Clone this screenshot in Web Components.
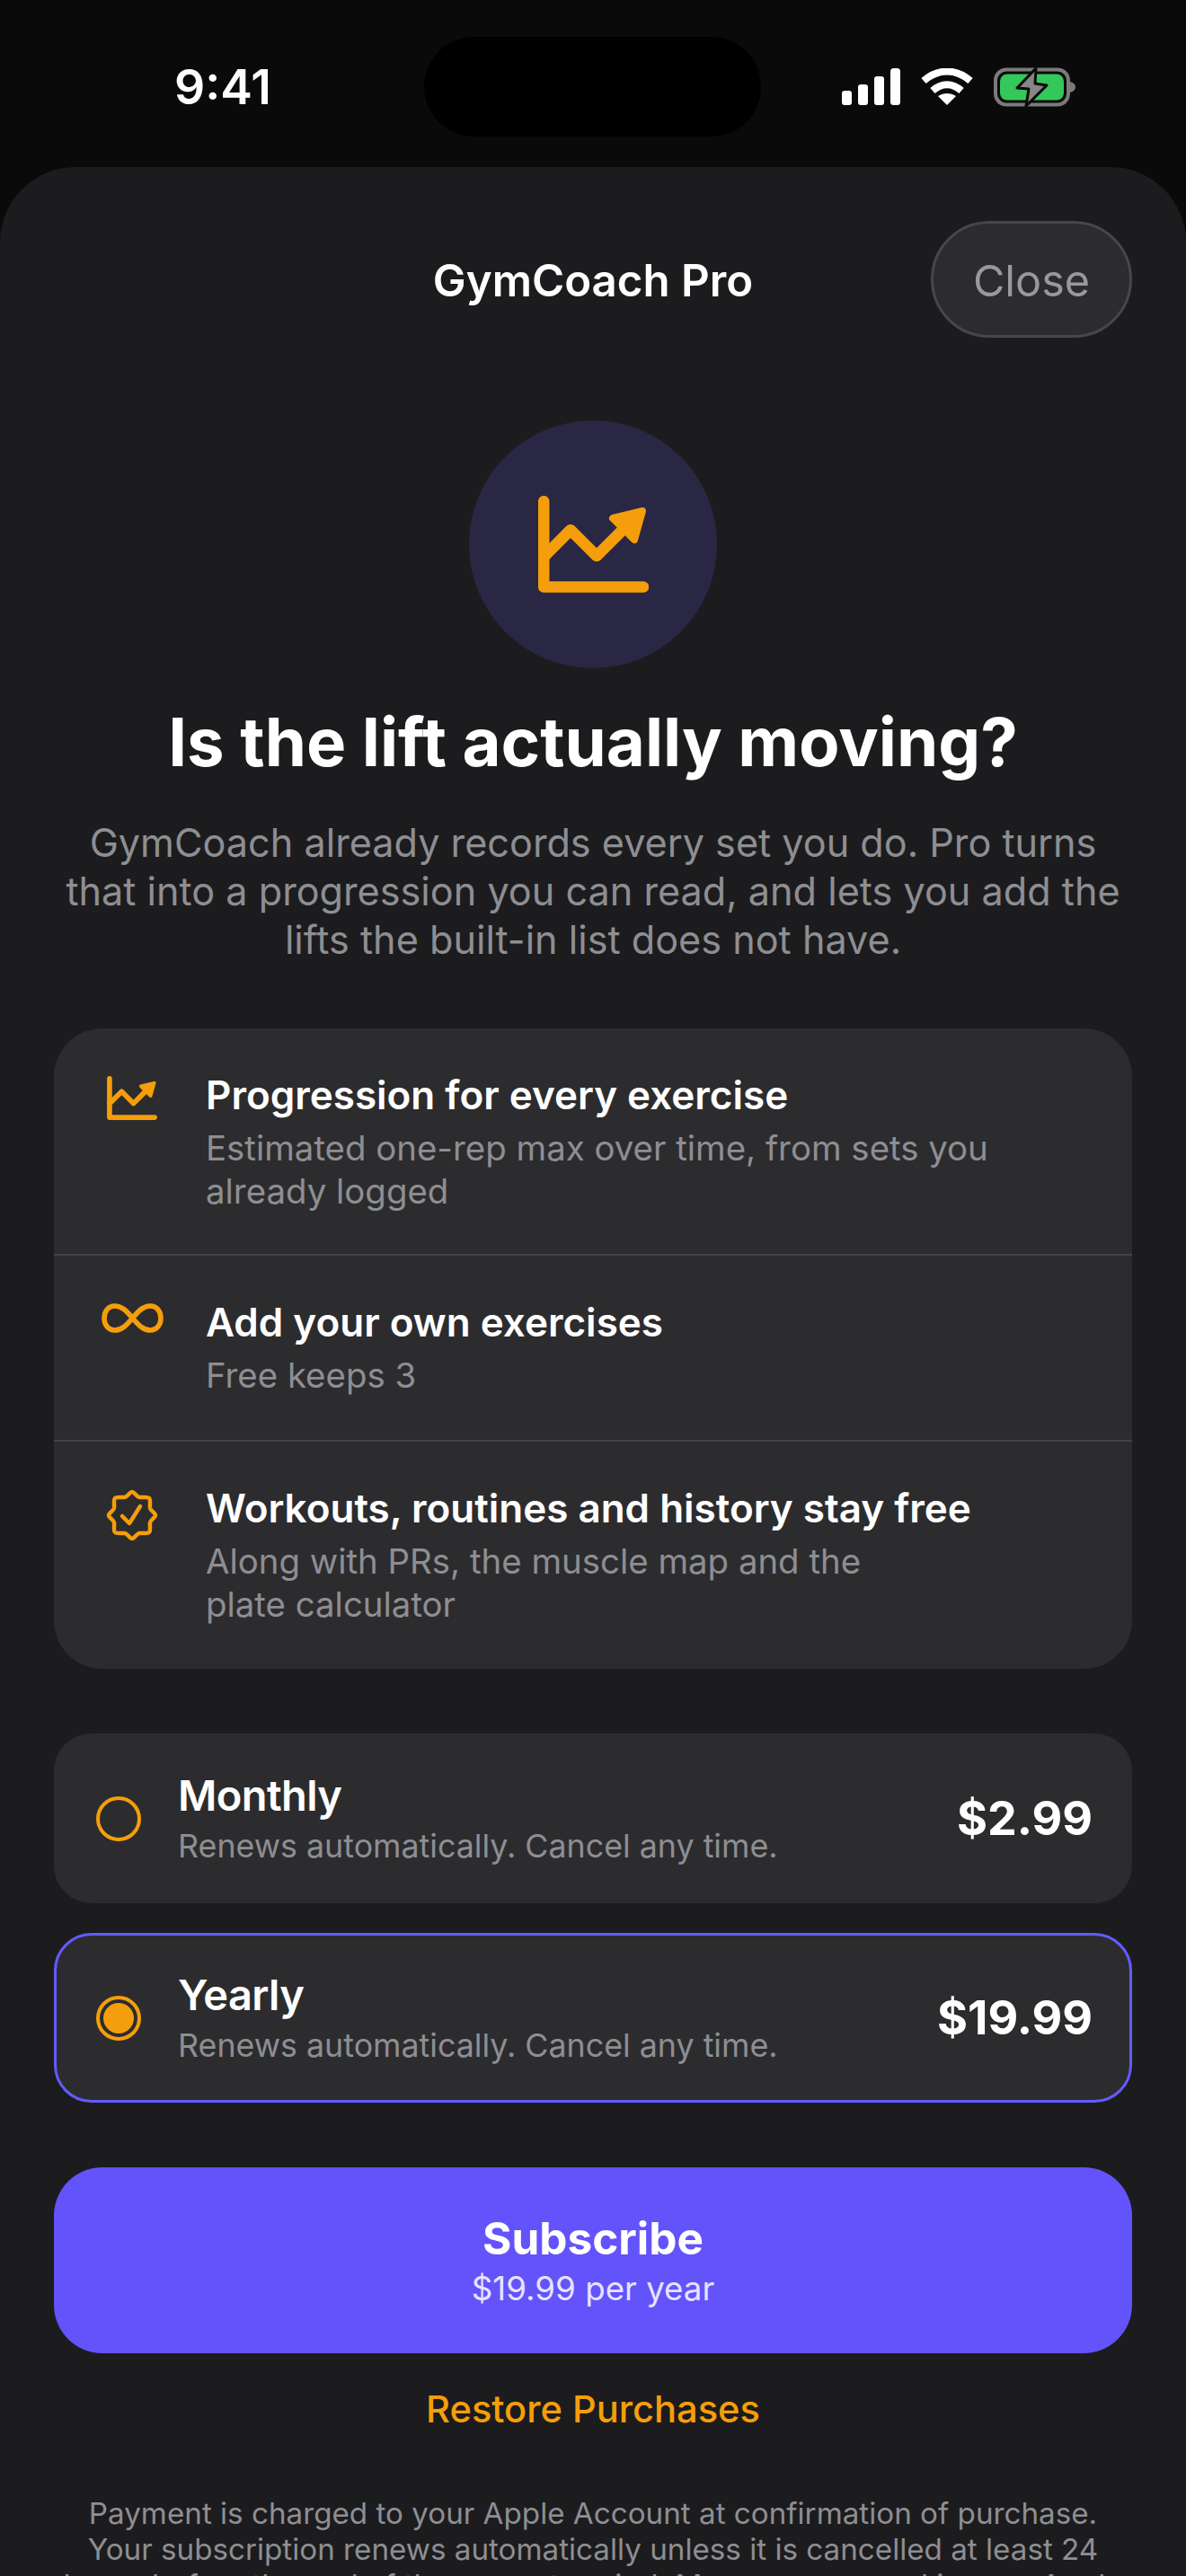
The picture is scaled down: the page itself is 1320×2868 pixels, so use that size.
<!DOCTYPE html>
<html>
<head>
<meta charset="utf-8">
<style>
  html, body { margin: 0; padding: 0; background: #0a0a0a; height: 2868px; overflow: hidden; }
  body { font-family: Inter, "Liberation Sans", sans-serif; color: #fff; }
</style>
</head>
<body>
<pay-screen>
  <status-bar slot="status"></status-bar>
  <pay-sheet>
    <sheet-header title="GymCoach Pro"></sheet-header>
    <hero-block heading="Is the lift actually moving?">GymCoach already records every set you do. Pro turns<br>that into a progression you can read, and lets you add the<br>lifts the built-in list does not have.</hero-block>
    <feature-list>
      <feature-row icon="chart" name="Progression for every exercise">Estimated one-rep max over time, from sets you<br>already logged</feature-row>
      <feature-row icon="infinity" name="Add your own exercises">Free keeps 3</feature-row>
      <feature-row icon="badge" name="Workouts, routines and history stay free">Along with PRs, the muscle map and the<br>plate calculator</feature-row>
    </feature-list>
    <plan-option name="Monthly" price="$2.99" first>Renews automatically. Cancel any time.</plan-option>
    <plan-option name="Yearly" price="$19.99" selected>Renews automatically. Cancel any time.</plan-option>
    <subscribe-button label="Subscribe">$19.99 per year</subscribe-button>
    <legal-footer link="Restore Purchases">Payment is charged to your Apple Account at confirmation of purchase.<br>Your subscription renews automatically unless it is cancelled at least 24<br>hours before the end of the current period. Manage or cancel in your Apple</legal-footer>
  </pay-sheet>
</pay-screen>

<script>
const icons = {
  chart: `<svg viewBox="0 0 123 108" width="123" height="108" fill="none" stroke="currentColor" stroke-width="12.5" stroke-linecap="round" stroke-linejoin="round"><path d="M6.2 6.2V101.5H117"/><path d="M6.2 68L36 38L65 67L97 35"/><path d="M83 25L116 17L107 49Z" fill="currentColor" stroke-width="8"/></svg>`,
  infinity: `<svg viewBox="0 0 69 33" width="69" height="33" fill="none" stroke="currentColor" stroke-width="5.6"><path d="M34.5 16.5C27 7.5 22 3 14.5 3C7.5 3 3 9 3 16.5C3 24 7.5 30 14.5 30C22 30 27 25.5 34.5 16.5C42 7.5 47 3 54.5 3C61.5 3 66 9 66 16.5C66 24 61.5 30 54.5 30C47 30 42 25.5 34.5 16.5Z"/></svg>`,
  badge: `<svg viewBox="0 0 58 58" width="58" height="58" fill="none" stroke="currentColor" stroke-width="4.5" stroke-linecap="round" stroke-linejoin="round"><path d="M29 3C31.5 3 34 8.5 37 9C41 9.5 46 8 48 10C50 12 48.5 17 49 21C49.5 24 55 26.5 55 29C55 31.5 49.5 34 49 37C48.5 41 50 46 48 48C46 50 41 48.5 37 49C34 49.5 31.5 55 29 55C26.5 55 24 49.5 21 49C17 48.5 12 50 10 48C8 46 9.5 41 9 37C8.5 34 3 31.5 3 29C3 26.5 8.5 24 9 21C9.5 17 8 12 10 10C12 8 17 9.5 21 9C24 8.5 26.5 3 29 3Z"/><path d="M18 30L26 38L38 19"/></svg>`
};

function define(name, html, setup) {
  customElements.define(name, class extends HTMLElement {
    constructor() {
      super();
      this.attachShadow({ mode: 'open' });
      this.shadowRoot.innerHTML = html;
    }
    connectedCallback() {
      if (setup) setup(this, this.shadowRoot);
    }
  });
}

define('pay-screen', `
  <style>
    :host { display: block; width: 1320px; height: 2868px; overflow: hidden; }
  </style>
  <slot name="status"></slot>
  <slot></slot>
`);

define('status-bar', `
  <style>
    :host { display: flex; align-items: center; height: 186px; box-sizing: border-box; padding: 0 0 0 194px; }
    .time { font-size: 53.5px; font-weight: 600; width: 278px; line-height: 62px; margin-top: 8px; }
    .island { width: 375px; height: 111px; border-radius: 56px; background: #000; margin-top: 7px; }
    .right { display: flex; align-items: center; gap: 22px; margin-left: 90px; margin-top: 8px; }
    .battery { margin-left: 1px; }
  </style>
  <div class="time">9:41</div>
  <div class="island"></div>
  <div class="right">
    <svg width="66" height="42" viewBox="0 0 66 42" fill="#fff"><rect x="0" y="25" width="11" height="16" rx="3"/><rect x="18" y="18" width="11" height="23" rx="3"/><rect x="36" y="9" width="11" height="32" rx="3"/><rect x="54" y="0" width="11" height="41" rx="3.5"/></svg>
    <svg width="58" height="42" viewBox="0 0 58 42" fill="none" stroke="#fff" stroke-width="8"><path d="M3 14C19 0 39 0 55 14"/><path d="M13 25C23 16 35 16 45 25"/><path d="M29 41L19 31C25 27 33 27 39 31Z" fill="#fff" stroke="none"/></svg>
    <svg class="battery" width="92" height="44" viewBox="0 0 92 44" fill="none"><rect x="2" y="2.5" width="81" height="39" rx="12" stroke="#7a7a7a" stroke-width="4"/><rect x="7" y="7.5" width="71" height="29" rx="8" fill="#34c759"/><path d="M85 16C89 17 91 19 91 22C91 25 89 27 85 28Z" fill="#7a7a7a"/><path d="M47 1L26 23L39 24L36 43L59 20L46 18Z" fill="#868686" stroke="#0a0a0a" stroke-width="3" stroke-linejoin="round"/></svg>
  </div>
`);

define('pay-sheet', `
  <style>
    :host { display: block; background: #1c1c1e; border-radius: 84px 84px 0 0; padding: 60px 60px 0; height: 2682px; box-sizing: border-box; }
  </style>
  <slot></slot>
`);

define('sheet-header', `
  <style>
    :host { display: grid; grid-template-columns: 224px 1fr 224px; align-items: center; height: 130px; }
    .title { text-align: center; font-size: 49.2px; font-weight: 600; padding-top: 2px; }
    .close { grid-column: 3; height: 130px; border-radius: 65px; box-sizing: border-box; border: 3px solid #47474a; background: #2c2c2e; color: #98989d; font-size: 48.5px; display: flex; align-items: center; justify-content: center; padding-top: 2px; }
  </style>
  <div></div>
  <div class="title"></div>
  <div class="close">Close</div>
`, (el, root) => { root.querySelector('.title').textContent = el.getAttribute('title'); });

define('hero-block', `
  <style>
    :host { display: block; text-align: center; padding-top: 92px; }
    .circle { width: 276px; height: 276px; border-radius: 50%; background: #2a2745; margin: 0 auto; display: flex; align-items: center; justify-content: center; color: #f59e0b; }
    h1 { font-size: 74.3px; font-weight: 700; margin: 36px 0 0; line-height: 92px; white-space: nowrap; }
    p { margin: 39px 0 0; font-size: 43.2px; line-height: 54px; color: #8e8e93; white-space: nowrap; }
  </style>
  <div class="circle"></div>
  <h1></h1>
  <p><slot></slot></p>
`, (el, root) => {
  root.querySelector('h1').textContent = el.getAttribute('heading');
  root.querySelector('.circle').innerHTML = icons.chart;
});

define('feature-list', `
  <style>
    :host { display: block; margin-top: 72px; background: #2c2c2e; border-radius: 54px; }
    ::slotted(feature-row:not(:last-child)) { border-bottom: 2px solid #434345; }
  </style>
  <slot></slot>
`);

define('feature-row', `
  <style>
    :host { display: grid; grid-template-columns: 169px 1fr; padding: 44px 0 0; box-sizing: border-box; }
    .icon { color: #f59e0b; display: flex; justify-content: center; padding-left: 5px; }
    .icon svg { display: block; margin-top: 9px; }
    .name { font-size: 44px; font-weight: 600; line-height: 60px; white-space: nowrap; }
    .sub { font-size: 38.4px; line-height: 47.5px; color: #8e8e93; margin-top: 6px; white-space: nowrap; }
  </style>
  <div class="icon"></div>
  <div>
    <div class="name"></div>
    <div class="sub"><slot></slot></div>
  </div>
`, (el, root) => {
  const kind = el.getAttribute('icon');
  root.querySelector('.name').textContent = el.getAttribute('name');
  root.querySelector('.icon').innerHTML = icons[kind];
  el.style.height = kind === 'infinity' ? '207px' : '253px';
  if (kind === 'chart') {
    const svg = root.querySelector('svg');
    svg.setAttribute('width', '56');
    svg.setAttribute('height', '49');
  }
});

define('plan-option', `
  <style>
    :host { display: flex; align-items: center; height: 189px; box-sizing: border-box; background: #2c2c2e; border-radius: 42px; border: 3px solid transparent; padding: 0 41px 0 44px; margin-top: 33px; }
    :host([selected]) { border-color: #635bff; }
    :host([first]) { margin-top: 72px; }
    .radio { width: 50px; height: 50px; border-radius: 50%; box-sizing: border-box; border: 4px solid #f59e0b; display: flex; align-items: center; justify-content: center; margin-right: 41px; flex: none; }
    .dot { display: none; width: 34px; height: 34px; border-radius: 50%; background: #f59e0b; }
    :host([selected]) .dot { display: block; }
    .text { flex: 1; }
    .name { font-size: 47px; font-weight: 600; letter-spacing: -0.6px; line-height: 53px; }
    .sub { font-size: 35.8px; line-height: 44px; margin-top: 8px; color: #8e8e93; }
    .price { font-size: 52px; font-weight: 700; }
  </style>
  <div class="radio"><div class="dot"></div></div>
  <div class="text"><div class="name"></div><div class="sub"><slot></slot></div></div>
  <div class="price"></div>
`, (el, root) => {
  root.querySelector('.name').textContent = el.getAttribute('name');
  root.querySelector('.price').textContent = el.getAttribute('price');
});

define('subscribe-button', `
  <style>
    :host { display: flex; flex-direction: column; align-items: center; justify-content: center; height: 207px; margin-top: 72px; background: #6353fb; border-radius: 54px; }
    .label { font-size: 49.5px; font-weight: 700; line-height: 57px; }
    .sub { font-size: 36.7px; line-height: 44px; margin-top: 5px; color: #e6e3ff; }
  </style>
  <div class="label"></div>
  <div class="sub"><slot></slot></div>
`, (el, root) => { root.querySelector('.label').textContent = el.getAttribute('label'); });

define('legal-footer', `
  <style>
    :host { display: block; text-align: center; }
    .link { color: #f59e0b; font-size: 41.6px; font-weight: 500; line-height: 52px; margin-top: 36px; }
    .text { color: #8e8e93; font-size: 33.2px; line-height: 40px; margin-top: 70px; white-space: nowrap; }
  </style>
  <div class="link"></div>
  <div class="text"><slot></slot></div>
`, (el, root) => { root.querySelector('.link').textContent = el.getAttribute('link'); });
</script>
</body>
</html>
